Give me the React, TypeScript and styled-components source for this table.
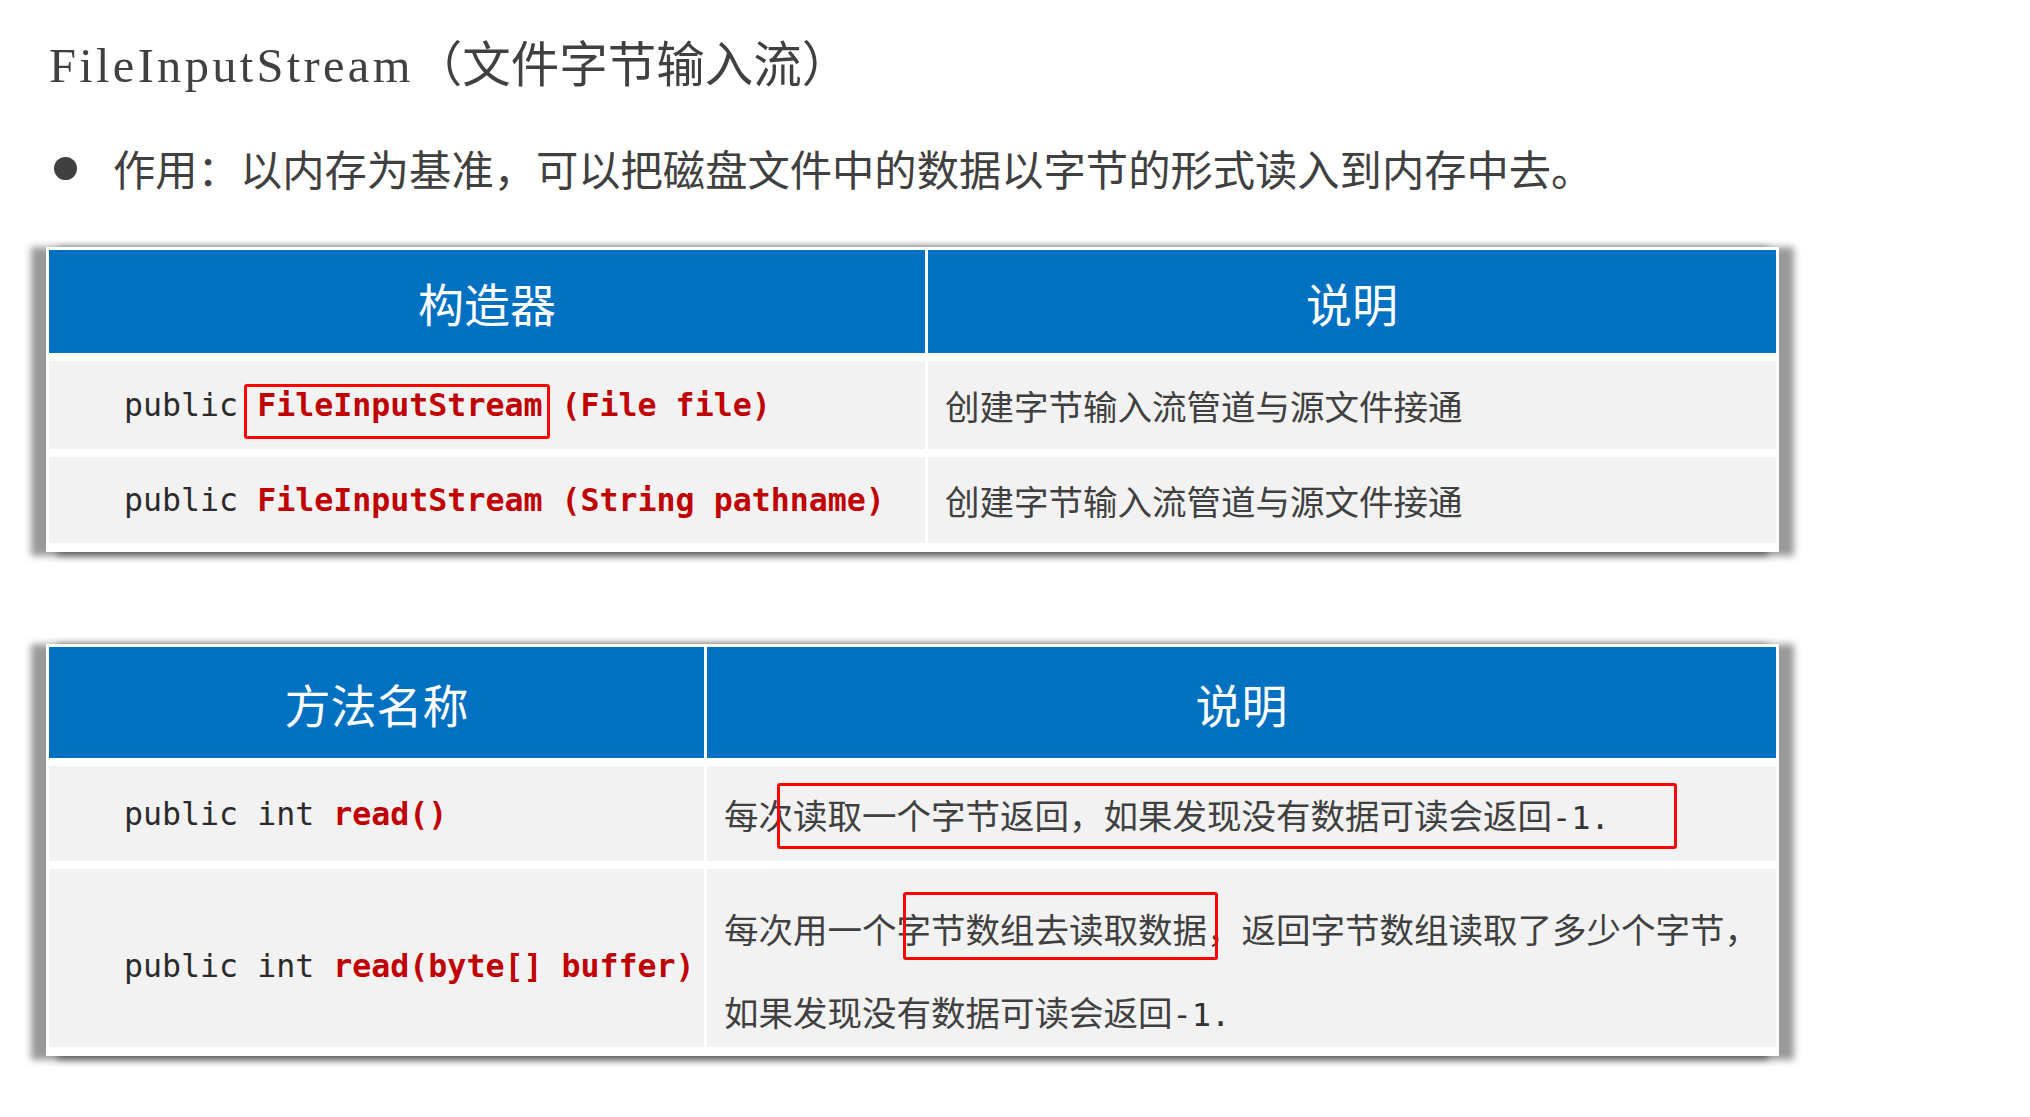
import React from 'react';
import styled, { createGlobalStyle } from 'styled-components';

const CJK = `"Noto Sans CJK SC", "Noto Sans", sans-serif`;
const MONO = `"DejaVu Sans Mono", "Liberation Mono", monospace`;

const GlobalStyle = createGlobalStyle`
  html, body { margin: 0; padding: 0; background: #ffffff; }
  body { font-family: ${CJK}; }
`;

const Page = styled.div`
  width: 2030px;
  height: 1117px;
  box-sizing: border-box;
  padding: 31px 0 0 46px;
  display: flex;
  flex-direction: column;
  color: #404040;
  overflow: hidden;
`;

const Title = styled.h1`
  margin: 0 0 0 3px;
  height: 60px;
  font-family: ${CJK};
  font-weight: 400;
  font-size: 48.5px;
  line-height: 60px;
  color: #404040;
  white-space: nowrap;
`;

const TitleLatin = styled.span`
  font-family: "Liberation Serif", serif;
  letter-spacing: 3.3px;
`;

const BulletRow = styled.div`
  margin: 47px 0 0 8px;
  display: flex;
  align-items: center;
  gap: 36px;
  height: 60px;
`;

const Dot = styled.span`
  width: 23px;
  height: 23px;
  border-radius: 50%;
  background: #404040;
  flex: none;
`;

const BulletText = styled.p`
  margin: 0;
  font-family: ${CJK};
  font-size: 42.3px;
  line-height: 60px;
  color: #404040;
  white-space: nowrap;
`;

const TableFrame = styled.div<{ $cols: string; $rows: string; $top: number }>`
  margin-top: ${(p) => p.$top}px;
  width: 1733px;
  box-sizing: border-box;
  padding: 3px 3px 9px 3px;
  background: #ffffff;
  display: grid;
  grid-template-columns: ${(p) => p.$cols};
  grid-template-rows: ${(p) => p.$rows};
  column-gap: 3px;
  row-gap: 8px;
  box-shadow: -13px 2px 7px 2px rgba(0, 0, 0, 0.4), 13px 2px 7px 2px rgba(0, 0, 0, 0.4);
`;

const HeaderCell = styled.div`
  background: #0070c0;
  color: #ffffff;
  font-family: ${CJK};
  font-size: 46px;
  display: flex;
  align-items: center;
  justify-content: center;
`;

const BodyCell = styled.div<{ $pad: number; $top?: boolean; $shift?: number }>`
  position: relative;
  background: #f2f2f2;
  display: flex;
  align-items: ${(p) => (p.$top ? 'flex-start' : 'center')};
  padding-left: ${(p) => p.$pad}px;
  padding-top: ${(p) => p.$shift ?? 0}px;
  box-sizing: border-box;
`;

const Code = styled.span`
  font-family: ${MONO};
  font-size: 31.6px;
  color: #2b2b2b;
  white-space: pre;
`;

const Kw = styled.span`
  color: #c00000;
  font-weight: 700;
`;

const Desc = styled.div<{ $lh?: number; $padTop?: number }>`
  font-family: ${CJK};
  font-size: 34.5px;
  line-height: ${(p) => (p.$lh ? `${p.$lh}px` : 'normal')};
  padding-top: ${(p) => p.$padTop ?? 0}px;
  color: #404040;
  white-space: nowrap;
`;

const Num = styled.span`
  font-family: ${MONO};
  font-size: 32px;
  color: #333333;
`;

const Highlight = styled.span<{ $x: number; $y: number; $w: number; $h: number }>`
  position: absolute;
  left: ${(p) => p.$x}px;
  top: ${(p) => p.$y}px;
  width: ${(p) => p.$w}px;
  height: ${(p) => p.$h}px;
  box-sizing: border-box;
  border: 3px solid #ff0000;
  border-radius: 3px;
  pointer-events: none;
`;

export default function App() {
  return (
    <>
      <GlobalStyle />
      <Page>
        <Title>
          <TitleLatin>FileInputStream</TitleLatin>（文件字节输入流）
        </Title>

        <BulletRow>
          <Dot />
          <BulletText>作用：以内存为基准，可以把磁盘文件中的数据以字节的形式读入到内存中去。</BulletText>
        </BulletRow>

        <TableFrame $cols="876px 848px" $rows="103px 88px 86px" $top={49}>
          <HeaderCell>构造器</HeaderCell>
          <HeaderCell>说明</HeaderCell>

          <BodyCell $pad={75}>
            <Code>
              public <Kw>FileInputStream (File file)</Kw>
            </Code>
            <Highlight $x={195} $y={23} $w={306} $h={55} />
          </BodyCell>
          <BodyCell $pad={17}>
            <Desc>创建字节输入流管道与源文件接通</Desc>
          </BodyCell>

          <BodyCell $pad={75}>
            <Code>
              public <Kw>FileInputStream (String pathname)</Kw>
            </Code>
          </BodyCell>
          <BodyCell $pad={17}>
            <Desc>创建字节输入流管道与源文件接通</Desc>
          </BodyCell>
        </TableFrame>

        <TableFrame $cols="655px 1069px" $rows="111px 95px 178px" $top={92}>
          <HeaderCell>方法名称</HeaderCell>
          <HeaderCell>说明</HeaderCell>

          <BodyCell $pad={75}>
            <Code>
              public int <Kw>read()</Kw>
            </Code>
          </BodyCell>
          <BodyCell $pad={17}>
            <Desc>
              每次读取一个字节返回，如果发现没有数据可读会返回<Num>-1.</Num>
            </Desc>
            <Highlight $x={70} $y={17} $w={900} $h={66} />
          </BodyCell>

          <BodyCell $pad={75} $shift={16}>
            <Code>
              public int <Kw>read(byte[] buffer)</Kw>
            </Code>
          </BodyCell>
          <BodyCell $pad={17} $top>
            <Desc $lh={83} $padTop={18}>
              每次用一个字节数组去读取数据，返回字节数组读取了多少个字节，
              <br />
              如果发现没有数据可读会返回<Num>-1.</Num>
            </Desc>
            <Highlight $x={196} $y={23} $w={315} $h={68} />
          </BodyCell>
        </TableFrame>
      </Page>
    </>
  );
}
